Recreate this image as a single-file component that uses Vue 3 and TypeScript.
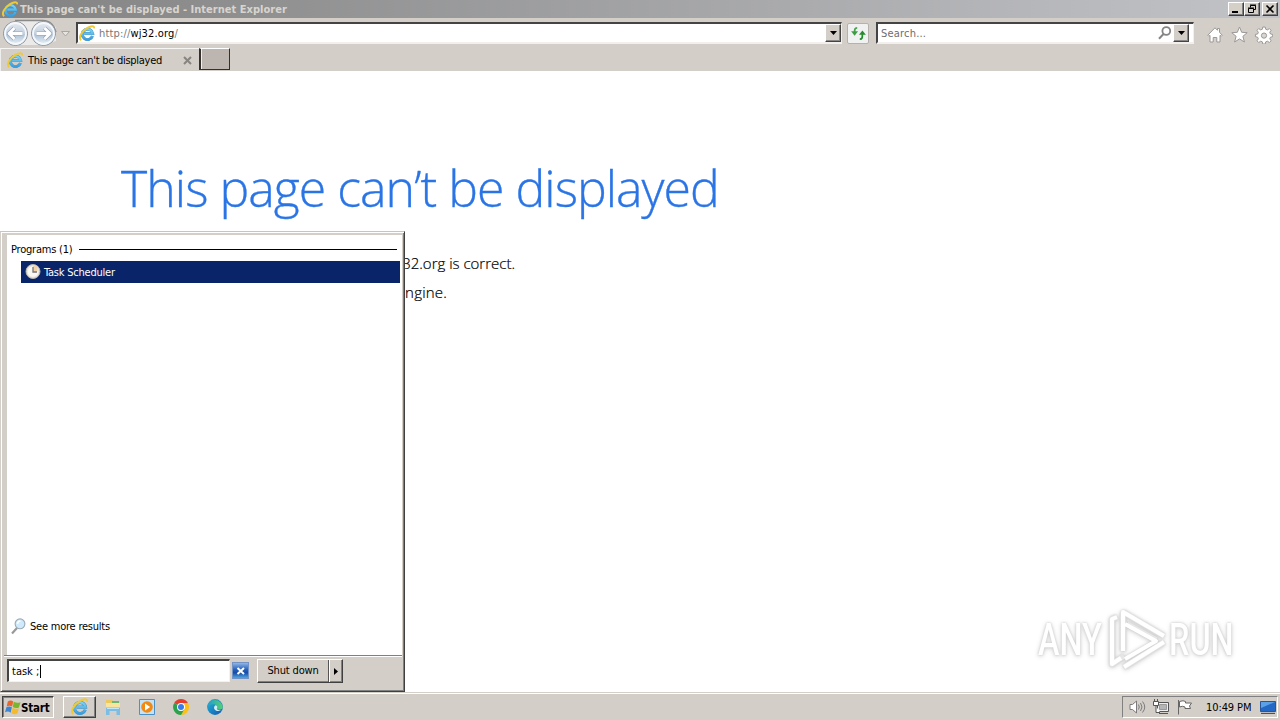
<script setup lang="ts">
import { ref } from 'vue'

const pageTitle = 'This page can’t be displayed'
const query = ref('task ;')
const results = ['Task Scheduler']
</script>

<template>
  <div class="screen">
    <svg class="defs" width="0" height="0">
      <defs>
        <linearGradient id="ieBlue" x1="0" y1="0" x2="0" y2="1">
          <stop offset="0" stop-color="#7ad3f2" />
          <stop offset="1" stop-color="#3a9fdf" />
        </linearGradient>
        <linearGradient id="orb" x1="0" y1="0" x2="0" y2="1">
          <stop offset="0" stop-color="#e9edf2" />
          <stop offset=".5" stop-color="#c3d0df" />
          <stop offset=".55" stop-color="#b0c3d7" />
          <stop offset="1" stop-color="#eef6fb" />
        </linearGradient>
        <linearGradient id="edgeFill" x1="0" y1="0" x2="1" y2="1">
          <stop offset="0" stop-color="#2bb5d8" />
          <stop offset="1" stop-color="#0b58b0" />
        </linearGradient>
        <linearGradient id="edgeTop" x1="0" y1="0" x2="1" y2="0">
          <stop offset="0" stop-color="#209ed4" />
          <stop offset="1" stop-color="#57d06a" />
        </linearGradient>
        <symbol id="ie" viewBox="0 0 16 16">
          <path d="M12.700 10.400A4.900 4.900 0 1 1 12.900 8.100H5" fill="none" stroke="#4a92c2" stroke-width="2.800" />
          <path d="M12.700 10.400A4.900 4.900 0 1 1 12.900 8.100H5" fill="none" stroke="url(#ieBlue)" stroke-width="2.100" />
          <path d="M2 14.300C-.8 12 2.200 6 7.800 2.700C11.300.7 14.500 .3 14.200 3.200" fill="none" stroke="#efca35" stroke-width="1.800" />
        </symbol>
      </defs>
    </svg>

    <header class="titlebar">
      <svg class="title-icon" width="17" height="17"><use href="#ie" /></svg>
      <span class="title-text">This page can't be displayed - Internet Explorer</span>
      <div class="window-buttons">
        <span class="wbtn"><svg width="14" height="12"><path d="M3 9h6" stroke="#000" stroke-width="2" /></svg></span>
        <span class="wbtn"><svg width="14" height="12"><path d="M5.500 4.500v-2h5v4h-2M5 2h6M3.500 5.500h5v4h-5zM3 5h6" fill="none" stroke="#000" /></svg></span>
        <span class="wbtn close"><svg width="14" height="12"><path d="M3.500 2.500l7 7M10.500 2.500l-7 7" stroke="#000" stroke-width="1.600" /></svg></span>
      </div>
    </header>

    <nav class="navbar">
      <svg class="orbs" width="76" height="29" viewBox="0 0 76 29">
        <path d="M15 2H43L56 9V23L43 27H15Z" fill="#ebeae8" />
        <path d="M15 2.500H43C50 2.500 55 8 56 14" fill="none" stroke="#8b8b8b" stroke-width="1.400" />
        <circle cx="15.500" cy="15.500" r="12" fill="url(#orb)" stroke="#87919d" />
        <circle cx="15.500" cy="15.500" r="10.500" fill="none" stroke="#f5f8fb" stroke-width="1.800" />
        <circle cx="43.500" cy="15.500" r="12" fill="url(#orb)" stroke="#87919d" />
        <circle cx="43.500" cy="15.500" r="10.500" fill="none" stroke="#f5f8fb" stroke-width="1.800" />
        <g fill="none" stroke-linejoin="round">
          <path d="M14.500 10l-5.500 5.500 5.500 5.500M9 15.500h13.500M44.500 10l5.500 5.500-5.500 5.500M50 15.500h-13.500" stroke="#8fa2b8" stroke-width="4.200" />
          <path d="M14.500 10l-5.500 5.500 5.500 5.500M9 15.500h13.500M44.500 10l5.500 5.500-5.500 5.500M50 15.500h-13.500" stroke="#fff" stroke-width="2.900" />
        </g>
        <path d="M61.500 13.500h8l-4 4.500z" fill="#e7e3df" stroke="#aaa7a3" />
      </svg>
      <div class="field address">
        <svg class="field-icon" width="17" height="17"><use href="#ie" /></svg>
        <span class="url"><i>http://</i>wj32.org<i>/</i></span>
        <span class="drop"><svg width="7" height="4"><path d="M0 0h7L3.500 4z" /></svg></span>
      </div>
      <span class="refresh">
        <svg width="15" height="13" viewBox="0 0 17 15">
          <path d="M7 1C4 1 4 3 4 7" fill="none" stroke="#43a44c" stroke-width="2" />
          <path d="M0 5h8L4 10z" fill="#3c9c44" />
          <path d="M10 14c3 0 3-2 3-6" fill="none" stroke="#258c2d" stroke-width="2" />
          <path d="M9 9h8L13 4z" fill="#258c2d" />
        </svg>
      </span>
      <div class="field search">
        <span class="placeholder">Search...</span>
        <svg class="glass" width="14" height="14" viewBox="0 0 14 14"><circle cx="8.300" cy="5" r="3.900" fill="#fff" stroke="#858585" stroke-width="1.800" /><path d="M5.500 8L1 12.700" stroke="#858585" stroke-width="2" /></svg>
        <span class="drop small"><svg width="7" height="4"><path d="M0 0h7L3.500 4z" /></svg></span>
      </div>
      <svg class="tools" width="66" height="18" viewBox="0 0 66 18" fill="#fff" stroke="#9b9895" stroke-linejoin="round">
        <path d="M.8 9.200L8 1.800l2.500 2.500V2.500h2V6.300l2.800 2.900-1 1-1.300-.8V16H9.800v-4.500H6.200V16H3V9.400l-1.200.8z" />
        <path d="M32.500 1l2.200 5.300 5.500.4-4.300 3.600 1.500 5.700-4.900-3.100-4.900 3.100 1.500-5.700-4.300-3.600 5.500-.4z" />
        <path d="M55.800 1h2.400l.5 2.200 1.700.7 2-1.300 1.700 1.700-1.300 2 .7 1.700 2.200.4v2.300l-2.200.5-.7 1.600 1.300 2-1.700 1.700-2-1.300-1.700.7-.5 2.100h-2.400l-.4-2.100-1.700-.7-2 1.300-1.700-1.700 1.300-2-.7-1.600-2.200-.5V8.400l2.200-.4.7-1.700-1.300-2 1.700-1.700 2 1.300 1.700-.7z" />
        <circle cx="57" cy="9.600" r="2.600" fill="#d9d5d1" />
      </svg>
    </nav>

    <div class="tabs">
      <div class="tab">
        <svg width="17" height="17"><use href="#ie" /></svg>
        <span>This page can't be displayed</span>
        <svg class="tab-close" width="9" height="9"><path d="M1 1l7 7M8 1L1 8" stroke="#888481" stroke-width="2" /></svg>
      </div>
      <div class="new-tab"></div>
    </div>

    <main class="page">
      <h1>{{ pageTitle }}</h1>
      <ul>
        <li><span class="addr-line">Make sure the web address http://wj32.org is correct.</span></li>
        <li><span class="engine-line">Look for the page with your search engine.</span></li>
      </ul>
      <div class="watermark">
        <span class="any">ANY</span>
        <svg width="62" height="66" viewBox="0 0 62 66" fill="none" stroke="#fff" stroke-width="4" stroke-linejoin="round">
          <path d="M16 5L57 29M16 5V44M20 17L49 33M10 10L5 12V57L17 49M17 60L57 35" stroke="#e6e6e6" stroke-width="5.500" />
          <path d="M16 44V5L57 29M18 17L49 34L18 52M10 10L5 12V57L14 51M17 60L57 35" />
        </svg>
        <span class="run">RUN</span>
      </div>
    </main>

    <section class="menu">
      <div class="menu-results">
        <div class="group"><span>Programs (1)</span><hr></div>
        <div v-for="item in results" :key="item" class="result">
          <svg width="16" height="16" viewBox="0 0 16 16"><circle cx="8" cy="7.500" r="7" fill="#e8e4da" stroke="#b9b6ae" /><circle cx="8" cy="7.500" r="5.300" fill="#faf9f2" /><path d="M8 2V7.500H12.500V2z" fill="#f2d3a5" /><path d="M8 3v5h4" fill="none" stroke="#77747a" stroke-width="1.300" /></svg>
          <span>{{ item }}</span>
        </div>
        <div class="more">
          <svg width="16" height="17" viewBox="0 0 16 17"><path d="M1 15.500l5-5.500" stroke="#999" stroke-width="2.200" /><circle cx="9" cy="5.800" r="4.900" fill="#cfeafa" stroke="#9aaab6" stroke-width="1.100" /><path d="M6.500 6c0-2 1-3 3-3" stroke="#fff" fill="none" stroke-width="1.500" /></svg>
          <span>See more results</span>
        </div>
      </div>
      <div class="menu-foot">
        <div class="query"><span>{{ query }}</span><b></b></div>
        <span class="clear"><svg width="10" height="8"><path d="M1.500 1l6.500 6M8 1L1.500 7" stroke="#fff" stroke-width="2" /></svg></span>
        <div class="power"><span class="shut"><span>Shut down</span></span><span class="arrow"><svg width="4" height="7"><path d="M0 0v7l4-3.500z" /></svg></span></div>
      </div>
    </section>

    <footer class="taskbar">
      <div class="start">
        <svg width="16" height="17" viewBox="0 0 17 17">
          <path d="M3 2Q6 0 8.700 2L7.600 7.500Q5 5.900 1.800 7.400z" fill="#e8652b" />
          <path d="M9.300 2.500Q13 4.500 16.500 2.800L14.800 8.400Q11.500 9.900 8.300 8z" fill="#79b62e" />
          <path d="M1.500 8.200Q4.500 6.500 7.300 8.200L6 14Q3.500 12 0 13.500z" fill="#3b85d2" />
          <path d="M8.100 8.800Q11.500 10.700 14.700 9.200L13.200 15Q10 16.500 6.800 14.500z" fill="#f4bb2d" />
        </svg>
        <b>Start</b>
      </div>
      <div class="running"><svg width="18" height="18"><use href="#ie" /></svg></div>
      <svg class="launch" width="16" height="16" viewBox="0 0 16 16"><path d="M1 1h6l1 1h6v9H1z" fill="#edc85a" /><path d="M1 4h14v7H1z" fill="#f8e49c" /><path d="M7 3h7" stroke="#6eb66b" stroke-width="2" /><path d="M1 8.500h14V16h-3.500v-4h-7v4H1z" fill="#7dbce3" /><path d="M2 9.500h12" stroke="#c2e7f9" /></svg>
      <svg class="launch" width="16" height="16" viewBox="0 0 16 16"><path d="M.5.500h15v15H.5z" fill="#c5e1f4" stroke="#4b91c5" /><circle cx="8" cy="8" r="5.800" fill="#f18a12" /><path d="M6 4.500v7l5.200-3.500z" fill="#fff" /></svg>
      <svg class="launch" width="16" height="16" viewBox="0 0 16 16"><path d="M8 8L1.200 4A7.900 7.900 0 0 1 14.900 4z" fill="#e43e2f" /><path d="M8 8V4H14.900A7.900 7.900 0 0 1 8 15.900z" fill="#fbc116" /><path d="M8 8L11.500 10 8 15.900A7.900 7.900 0 0 1 1.200 4z" fill="#2da14c" /><circle cx="8" cy="8" r="4" fill="#fff" /><circle cx="8" cy="8" r="3" fill="#3b7de8" /></svg>
      <svg class="launch" width="16" height="16" viewBox="0 0 16 16"><circle cx="8" cy="8" r="7.900" fill="url(#edgeFill)" /><path d="M.3 7A7.900 7.900 0 0 1 15.800 8C15.800 11 11.500 11.500 9.800 9.700C11 7.500 9.300 5.200 6.300 5.200C3 5.200 1 7 .3 9z" fill="url(#edgeTop)" /><path d="M9.800 9.700C11 7.800 10 6.200 8.300 6.200C5 9 8.500 14 15 11.300C12.500 11.700 10.500 11 9.800 9.700z" fill="#d3edf4" /></svg>
      <div class="tray">
        <svg width="17" height="16" viewBox="0 0 17 16" fill="#fff" stroke="#7b7b7b"><path d="M1 5.500h2.500L7.500 2v12L3.500 10.500H1z" /><path d="M9.500 5.500q1.500 2.500 0 5M11.500 4q3 4 0 8M13.500 2.500q4.500 5.500 0 11" fill="none" /></svg>
        <svg class="net" width="17" height="16" viewBox="0 0 17 16" fill="#fff" stroke="#555"><path d="M4.500 3.500h11v9h-11z" fill="#eee" /><path d="M6.500 5.500h7v5h-7z" fill="#b5b5b5" stroke="#999" /><path d="M6 14.500h9M.5 2.500h5v4h-5zM1.500 0v3M4.500 0v3M3 7v6.500h4" /></svg>
        <svg class="flag" width="17" height="16" viewBox="0 0 17 16" fill="#fff" stroke="#666"><path d="M1.500 1v14.500M2.500 2.500q4-1.500 6 0v1.500h6l-2 3 1 2.500H8V8Q5.500 6.500 2.500 8z" /></svg>
        <span class="clock">10:49 PM</span>
        <svg width="16" height="15" viewBox="0 0 16 15"><path d="M.5 1.500h15v10H.5z" fill="#2468c5" stroke="#2a5699" /><path d="M1 2h14L1 8z" fill="#5aa1e8" /><path d="M1 12.500h14" stroke="#bbb" /><path d="M1 13.500h14" stroke="#456" /></svg>
      </div>
    </footer>
  </div>
</template>

<style>
body { margin: 0; overflow: hidden; }
</style>

<style scoped>
* { box-sizing: border-box; }
.screen { position: relative; width: 1280px; height: 720px; display: flex; flex-direction: column; overflow: hidden; background: #d4cec8; color: #000; font: 11px/14px "DejaVu Sans Condensed", "DejaVu Sans", sans-serif; font-stretch: condensed; white-space: nowrap; }
.defs { position: absolute; }
svg { display: block; flex: none; }

.titlebar { height: 18px; flex: none; display: flex; align-items: center; padding: 0 2px 0 2px; background: linear-gradient(90deg, #838383, #c2c3c7); }
.title-text { margin-left: 1px; padding-top: 1px; color: #d8d4ce; font-weight: bold; letter-spacing: .02px; }
.window-buttons { margin-left: auto; display: flex; }
.wbtn { width: 16px; height: 14px; background: #d4d0c8; border: 1px solid; border-color: #fff #404040 #404040 #fff; box-shadow: inset -1px -1px #808080; }
.close { margin-left: 2px; }

.navbar { height: 30px; flex: none; display: flex; align-items: flex-start; }
.field { height: 22px; margin-top: 4px; display: flex; align-items: center; background: #fff; border: 2px solid; border-color: #444 #f2efec #f2efec #444; border-right-width: 1px; }
.address { width: 766px; padding-left: 1px; }
.url { margin-left: 3px; padding-top: 2px; letter-spacing: .16px; }
.url i { font-style: normal; color: #777; }
.drop { margin-left: auto; width: 16px; height: 18px; display: flex; align-items: center; justify-content: center; background: #d4cec8; border: 1px solid; border-color: #fff #444 #444 #fff; box-shadow: inset -1px -1px #888; }
.refresh { width: 22px; height: 21px; margin: 5px 7px 0 5px; display: flex; align-items: center; justify-content: center; background: #f0f2f1; border: 1px solid #b4b1ae; border-radius: 2px; }
.search { width: 318px; padding-left: 3px; }
.placeholder { padding-top: 2px; color: #6d6d6d; letter-spacing: .2px; }
.glass { margin-left: auto; }
.drop.small { margin-left: 1px; margin-right: 4px; }
.tools { margin: 8px 0 0 13px; }

.tabs { height: 23px; flex: none; display: flex; }
.tab { width: 199px; display: flex; align-items: center; padding-left: 6px; border-top: 1px solid #f8f6f4; border-left: 1px solid #eee; }
.tab span { margin-left: 4px; padding-top: 1px; letter-spacing: -.28px; }
.tab-close { margin-left: auto; margin-right: 7px; }
.new-tab { width: 31px; height: 22px; background: #bdb5b0; border: 2px solid #35302e; border-top: 1px solid #fff; border-right-width: 1px; border-bottom-width: 1px; box-shadow: inset 1px 0 #f3efec; }

.page { position: relative; height: 621px; flex: none; background: #fff; padding-left: 121px; overflow: hidden; }
h1 { margin: 82px 0 0; height: 70px; color: #2a75e6; font: 300 50px/70px "Open Sans", sans-serif; letter-spacing: -.97px; -webkit-text-stroke: .35px #2a75e6; }
ul { list-style: none; margin: 26px 0 0; padding: 0; font: 300 15px/29px "Open Sans", sans-serif; color: #000; -webkit-text-stroke: .2px #000; }
li { display: flex; }
.addr-line { width: 394px; display: flex; justify-content: flex-end; }
.engine-line { width: 326px; display: flex; justify-content: flex-end; letter-spacing: .2px; }
.watermark { position: absolute; left: 1038px; top: 536px; display: flex; align-items: center; color: #fff; filter: drop-shadow(0 0 1px #ccc) drop-shadow(0 1px 2px #d4d4d4); }
.watermark span { font: 500 45px/50px Roboto, sans-serif; transform-origin: 0 50%; transform: scaleX(.72); }
.any { width: 69px; }
.run { width: 68px; }

.menu { position: absolute; left: 0; top: 231px; width: 405px; height: 461px; padding: 3px 2px 1px 3px; display: flex; flex-direction: column; background: #d4cec8; border: 1px solid; border-color: #c8c5c1 #404040 #404040 #d4cec8; box-shadow: inset 1px 1px #fff, inset -1px -1px #808080; }
.menu-results { height: 420px; margin-left: 3px; background: #fff; display: flex; flex-direction: column; letter-spacing: -.22px; }
.group { height: 26px; padding: 2px 5px 0 4px; display: flex; align-items: center; gap: 7px; }
.group span { padding-top: 1px; }
.group hr { flex: 1; height: 1px; border: 0; margin: 0; background: #000; }
.result { height: 22px; margin: 0 2px 0 14px; padding-left: 4px; display: flex; align-items: center; gap: 3px; color: #fff; background: #0a246a; }
.result span, .more span { padding-top: 1px; }
.more { margin-top: auto; margin-bottom: 20px; height: 18px; padding-left: 4px; display: flex; align-items: center; gap: 3px; }
.menu-foot { flex: 1; border-top: 1px solid #808080; box-shadow: inset 0 1px #fff; padding: 3px 0 0 3px; display: flex; align-items: flex-start; }
.query { width: 223px; height: 23px; display: flex; align-items: center; padding-left: 3px; background: #fff; border: 2px solid; border-color: #444 #f4f1ee #f4f1ee #444; border-right-width: 1px; border-bottom-width: 1px; }
.query span { padding-top: 1px; }
.query b { width: 1px; height: 13px; margin-left: 1px; background: #000; }
.clear { width: 17px; height: 17px; margin: 3px 0 0 2px; display: flex; align-items: center; justify-content: center; border: 1px solid #7193c5; background: linear-gradient(#90b6e4, #245fbb 45%, #174ba7 65%, #4ea7df); }
.power { width: 86px; height: 24px; margin-left: 8px; display: flex; border: 1px solid; border-color: #fff #404040 #404040 #fff; box-shadow: inset -1px -1px #808080; }
.shut { width: 71px; display: flex; align-items: center; justify-content: center; border-right: 1px solid #555; letter-spacing: -.15px; }
.arrow { width: 13px; display: flex; align-items: center; justify-content: center; border-left: 1px solid #fff; }

.taskbar { height: 28px; flex: none; display: flex; align-items: center; border-top: 1px solid #d4cec8; box-shadow: inset 0 1px #fff; background: #d4cec8; padding: 1px 2px 0; }
.start { width: 52px; height: 22px; display: flex; align-items: center; padding-left: 2px; border: 1px solid; border-color: #404040 #fff #fff #404040; box-shadow: inset 1px 1px #808080; }
.start b { padding-top: 1px; font-size: 11.500px; letter-spacing: -.2px; }
.running { width: 33px; height: 22px; margin-left: 9px; margin-right: 9px; display: flex; align-items: center; justify-content: center; border: 1px solid; border-color: #fff #404040 #404040 #fff; box-shadow: inset -1px -1px #808080; }
.launch { margin-right: 18px; }
.tray { width: 156px; height: 22px; margin-left: auto; padding-left: 6px; display: flex; align-items: center; border: 1px solid; border-color: #808080 #fff #fff #808080; }
.net { margin-left: 7px; }
.flag { margin-left: 7px; }
.clock { width: 46px; margin: 0 8px 0 12px; padding-top: 2px; letter-spacing: -.1px; }
</style>
